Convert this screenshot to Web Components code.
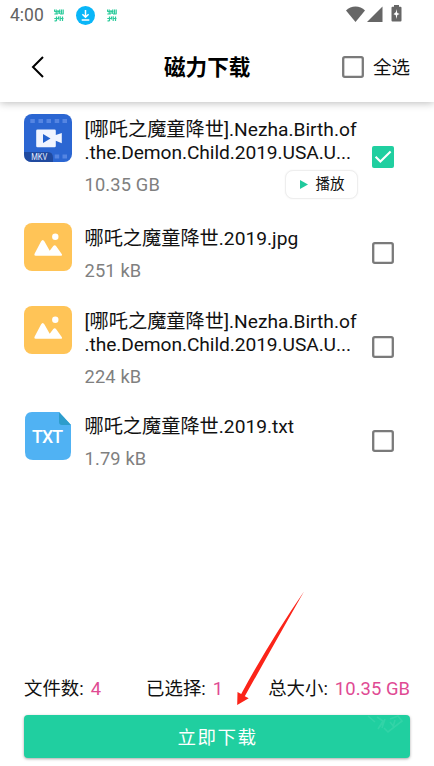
<!DOCTYPE html>
<html lang="zh-CN">
<head>
<meta charset="utf-8">
<title>磁力下载</title>
<style>
html,body{margin:0;background:#fff}
body{font-family:Roboto,"Noto Sans CJK SC",sans-serif;color:#111}
</style>
</head>
<body>
<download-page></download-page>
<script>
const define = (name, html) => customElements.define(name, class extends HTMLElement {
  constructor() {
    super();
    this.attachShadow({mode: 'open'});
  }
  connectedCallback() {
    this.shadowRoot.innerHTML = typeof html === 'function' ? html(this) : html;
  }
});

define('check-box', el => `<style>
:host{display:block;width:22px;height:22px;flex:none}
svg{display:block}
</style>
<svg width="22" height="22" viewBox="0 0 22 22" fill="none">${el.hasAttribute('checked')
  ? '<rect width="22" height="22" rx="2" fill="#20cfa0"/><path d="M3.600 10.700 8.400 15.500 18.600 5.400" stroke="#fff" stroke-width="2.100"/>'
  : '<rect x="1.200" y="1.200" width="19.600" height="19.600" rx="1.600" stroke="#7a7a7a" stroke-width="2.300"/>'}</svg>`);

const glyph = '<svg width="10" height="13" viewBox="0 0 10 13" fill="none" stroke="#2bcb9b" stroke-width="1.200"><path d="M.5 .5v2M2.200 .5v4.500M.3 2.500h3M.3 5h3.500M4 1v4M5.700.5v4.500M4.500 2.500h2M7.500.5v4M9.200 .5v4.500M6 5h3.500M.3 9.500h4M2.500 7.500v4.500M.5 11.800h2M4.500 7.500v3M6.200 7.200v4.800M5.500 9.500h4M8.500 7.500v4.500"/></svg>';

define('status-bar', `<style>
:host{display:flex;height:32px;box-sizing:border-box;align-items:center;padding:0 32px 2px 10px;font-size:17.500px;color:#626262}
.time{width:34px;line-height:20px;margin-right:10px}
svg{display:block;flex:none}
.load{margin:0 12px}
.gap{flex:1}
.signal{margin:0 8px 0 2px}
.side{margin-top:-3px}
</style>
<span class="time">4:00</span>${glyph}
<svg class="load" width="19" height="19" viewBox="0 0 19 19"><circle cx="9.500" cy="9.500" r="9.500" fill="#09b6f8"/><path d="M9.500 4v7M6.400 8.200l3.100 3.100 3.100-3.100M5.700 14h7.600" fill="none" stroke="#fff" stroke-width="1.500"/></svg>
${glyph}<span class="gap"></span>
<svg class="side" width="19" height="16" viewBox="0 0 19 16"><path d="M0 4.500C5-.7 14-.7 19 4.500L9.500 16Z" fill="#666"/></svg>
<svg class="signal side" width="16" height="16" viewBox="0 0 16 16"><path d="M15.500.5V16H0Z" fill="#666"/></svg>
<svg class="side" width="11" height="17" viewBox="0 0 11 17"><path d="M3 0h5v1.700h1.500q1 0 1 1V15.500q0 1-1 1h-8q-1 0-1-1V2.700q0-1 1-1H3Z" fill="#666"/><path d="M5.500 4 5 7 2.500 9.200 4.700 10 5.500 14 6.300 10 8.700 9 6.300 8Z" fill="#fff"/></svg>`);

define('app-bar', `<style>
:host{display:grid;grid-template-columns:72px 1fr auto;height:70px;align-items:center;padding:0 24px;background:#fff;box-shadow:0 1px 8px rgba(0,0,0,.27);clip-path:inset(0 0 -14px)}
svg{display:block;margin-left:7px}
h1{margin:0;font-size:21.600px;line-height:30px;font-weight:700;color:#000;padding-left:68px;white-space:nowrap;position:relative;top:1px}
label{display:flex;align-items:center;gap:8.500px;font-size:18.500px;line-height:24px}
span{position:relative;top:1px}
</style>
<svg width="13" height="22" viewBox="0 0 13 22"><path d="M12 1 2 11l10 10" fill="none" stroke="#000" stroke-width="2"/></svg>
<h1>磁力下载</h1>
<label><check-box></check-box><span>全选</span></label>`);

const icons = {
  mkv: `<rect width="48" height="48" rx="8" fill="#2b66d2"/>
<g fill="#5585e2"><rect x="6.300" y="5" width="4.500" height="4"/><rect x="14.500" y="5" width="4.500" height="4"/><rect x="22.500" y="5" width="4.500" height="4"/><rect x="30.700" y="5" width="4.500" height="4"/><rect x="38.500" y="5" width="4.500" height="4"/><rect x="30.700" y="40.500" width="4.500" height="4"/><rect x="38.500" y="40.500" width="4.500" height="4"/></g>
<path d="M13.500 15.500h17q1.300 0 1.300 1.300v4.200l6-2v10.200l-6-2.400v5.200q0 1.300-1.300 1.300h-17q-1.300 0-1.300-1.300V16.800q0-1.300 1.300-1.300Z" fill="#f1f5ff"/><path d="M19 20v9l7.500-4.500Z" fill="#2563ce"/>
<path d="M0 38h24q5 0 5 6v4H8q-8 0-8-8Z" fill="#204a9f"/><text x="7.300" y="46" font-size="8.300" textLength="16" lengthAdjust="spacingAndGlyphs" fill="#e5edff">MKV</text>`,
  image: `<rect width="48" height="48" rx="8" fill="#ffc457"/><path d="M10.700 30.500 17 18.500q1.700-3 3.500 0l5.200 9.200 3.600-4.700q1.500-1.700 2.900.2l5.700 8q.8 1.500-1 1.500H11.700q-2 0-1-2.200Z" fill="#fff"/><circle cx="31.300" cy="13.800" r="3.200" fill="#fff"/>`,
  txt: `<path d="M8 0h27l12 13v27q0 8-8 8H9q-8 0-8-8V8Q1 0 8 0Z" fill="#50b2f3"/><path d="M35 0 47 13H38q-3 0-3-3Z" fill="#2d9dcc"/><text x="8" y="31" font-size="17.800" font-weight="500" textLength="31" lengthAdjust="spacing" fill="#fff">TXT</text>`
};
define('file-icon', el => `<style>:host{display:block;width:48px;height:48px}svg{display:block}</style><svg width="48" height="48" viewBox="0 0 48 48">${icons[el.getAttribute('type')]}</svg>`);

define('play-button', `<style>
:host{display:flex;align-items:center;box-sizing:border-box;width:73px;height:29px;padding-left:14px;gap:8px;border:1px solid #eee;border-radius:8px;background:#fff;box-shadow:0 0 2px rgba(0,0,0,.06);font-size:14.500px;line-height:20px;color:#111;letter-spacing:0}
svg{display:block}
span{margin-top:2px}
</style><svg width="8" height="9" viewBox="0 0 8 9"><path d="M0 0 8 4.500 0 9Z" fill="#20c99c"/></svg><span><slot></slot></span>`);

define('file-row', el => `<style>
:host{display:grid;grid-template-columns:48px 273px 22px;column-gap:12.500px}
.text{margin-top:3.500px}
.name{font-size:19.200px;line-height:23px;white-space:nowrap;color:#111}
.name ::slotted(span){display:block}
.name ::slotted(.tail){letter-spacing:-.08px}
.meta{display:flex;justify-content:space-between;align-items:center;height:29px;margin-top:6px;font-size:18.300px;color:#808080;letter-spacing:.15px}
.check{padding-top:var(--check-top)}
.check check-box{margin-left:2px}
</style>
<file-icon type="${el.getAttribute('type')}"></file-icon>
<div class="text"><div class="name"><slot></slot></div><div class="meta"><span>${el.getAttribute('size')}</span><slot name="action"></slot></div></div>
<div class="check"><check-box ${el.hasAttribute('checked') ? 'checked' : ''}></check-box></div>`);

define('summary-item', el => `<style>:host{display:block;font-size:18.400px;line-height:24px;white-space:nowrap;color:#111}b{font-weight:400;color:#e04a93;margin-left:7px;letter-spacing:.05px}</style>${el.getAttribute('label')}:<b><slot></slot></b>`);

define('primary-button', `<style>
:host{display:flex;align-items:center;justify-content:center;height:43px;position:relative;border-radius:4px;background:#20cfa0;box-shadow:0 1px 3px rgba(0,0,0,.35);font-size:18.500px;letter-spacing:1.500px;color:#fff}
span{margin:-1px 0 0 1px}
svg{position:absolute;right:0;top:0}
</style><span><slot></slot></span><svg width="50" height="22" viewBox="0 0 50 22" fill="none" stroke="#48dab1" stroke-width="1.600" opacity=".45"><path d="M8 1l7 6M17 2l6 4-5 8M23 7l-5 7M25 4l-3 9M30 4l8-3 4 5-14 11-4-4M30 7l4 5M35 5l-2 7"/></svg>`);

define('pointer-arrow', `<style>:host{display:block;position:absolute;left:236px;top:591px;pointer-events:none}svg{display:block}</style><svg width="69" height="115" viewBox="0 0 69 115"><path d="M68 .5Q34 50 5.200 103L1.500 101 1.200 114 12.700 107.300 8.800 105.300Q37 55 68 .5Z" fill="#fb2419"/></svg>`);

define('download-page', `<style>
:host{display:flex;flex-direction:column;position:relative;width:434px;height:766px;background:#fff;overflow:hidden}
main{display:grid;grid-template-rows:109px 83px 105.500px 60px;padding:12px 24px 0;flex:1;align-content:start}
.summary{display:flex;justify-content:space-between;padding:0 24px 14px}
primary-button{margin:0 24px 8px}
</style>
<status-bar></status-bar><app-bar></app-bar>
<main>
<file-row type="mkv" size="10.35 GB" checked style="--check-top:32px"><span>[哪吒之魔童降世].Nezha.Birth.of</span><span class="tail">.the.Demon.Child.2019.USA.U...</span><play-button slot="action">播放</play-button></file-row>
<file-row type="image" size="251 kB" style="--check-top:19px"><span>哪吒之魔童降世.2019.jpg</span></file-row>
<file-row type="image" size="224 kB" style="--check-top:30px"><span>[哪吒之魔童降世].Nezha.Birth.of</span><span class="tail">.the.Demon.Child.2019.USA.U...</span></file-row>
<file-row type="txt" size="1.79 kB" style="--check-top:18.500px"><span>哪吒之魔童降世.2019.txt</span></file-row>
</main>
<div class="summary"><summary-item label="文件数">4</summary-item><summary-item label="已选择">1</summary-item><summary-item label="总大小">10.35 GB</summary-item></div>
<primary-button>立即下载</primary-button>
<pointer-arrow></pointer-arrow>`);
</script>
</body>
</html>
